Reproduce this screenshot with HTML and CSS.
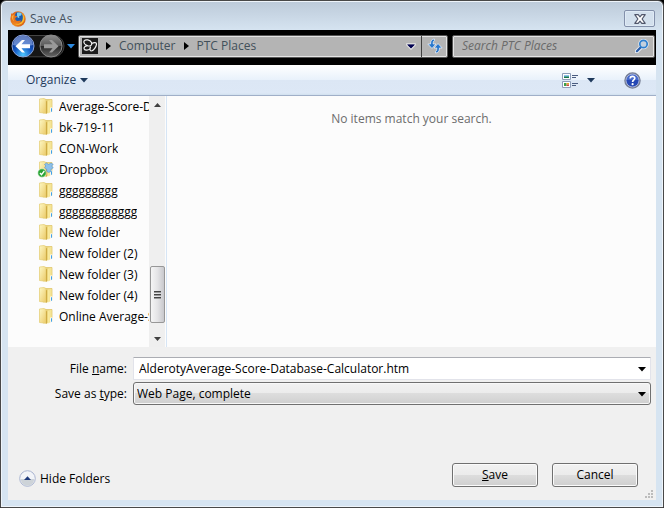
FILE: index.html
```html
<!DOCTYPE html>
<html lang="en">
<head>
    <meta charset="UTF-8">
    <meta name="viewport" content="width=device-width, initial-scale=1.0">
    <title>Save As</title>
    <link rel="stylesheet" href="styles.css">
</head>
<body>
    <svg class="defs" width="0" height="0" aria-hidden="true">
        <defs>
            <linearGradient id="gold" x1="0" x2="1" y1="0" y2="1">
                <stop offset="0" stop-color="#fdf8c4"/>
                <stop offset="1" stop-color="#ecca68"/>
            </linearGradient>
            <linearGradient id="goldSide" x1="0" x2="1">
                <stop offset="0" stop-color="#e2c864"/>
                <stop offset="1" stop-color="#f8eaa0"/>
            </linearGradient>
            <radialGradient id="blueBall" cx=".5" cy=".9" r=".8">
                <stop offset="0" stop-color="#4fc8ff"/>
                <stop offset=".5" stop-color="#1559c4"/>
                <stop offset="1" stop-color="#0b2a80"/>
            </radialGradient>
            <linearGradient id="greyBall" x1="0" x2="0" y1="0" y2="1">
                <stop offset="0" stop-color="#8c8c8c"/>
                <stop offset=".48" stop-color="#5a5a5a"/>
                <stop offset=".52" stop-color="#2a2a2a"/>
                <stop offset="1" stop-color="#666"/>
            </linearGradient>
            <linearGradient id="fox" x1="0" x2="1" y1="0" y2="1">
                <stop offset="0" stop-color="#d85a18"/>
                <stop offset=".6" stop-color="#f08a20"/>
                <stop offset="1" stop-color="#c84812"/>
            </linearGradient>
        </defs>
        <symbol id="folder" viewBox="0 0 14 17">
            <path d="M4 1.500h9v12l-9 1.500z" fill="url(#goldSide)" stroke="#dcc060" stroke-width=".7"/>
            <path d="M.5 1l4.500-.5 2 1v13.800L.5 14.500z" fill="url(#gold)" stroke="#e4cc70" stroke-width=".7"/>
            <path d="M7 3.500L8.500 2.500v12.500L7 16z" fill="#cfac44"/>
            <path d="M8.500 2.500l2.200 1V15l-2.200.5z" fill="#f9ea9c"/>
            <path d="M11.200 9.500h2.300v5h-2.300z" fill="#fff"/>
            <path d="M12 10.200h1v3.600h-1z" fill="#3fa0e8"/>
        </symbol>
        <symbol id="caret" viewBox="0 0 8 5">
            <path d="M0 0h8L4 4.500z" fill="currentColor"/>
        </symbol>
        <symbol id="chevron" viewBox="0 0 5 8">
            <path d="M0 0l5 4-5 4z" fill="#000"/>
        </symbol>
    </svg>

    <div class="window">
        <header class="titlebar">
            <svg class="app-icon" width="16" height="16" viewBox="0 0 16 16" aria-hidden="true">
                <circle cx="8" cy="8" r="7.700" fill="url(#fox)"/>
                <path d="M4.500 3C6 .600 10.500.400 12.500 3.500c1.300 2.500.8 5.500-1 7-2 1.200-4.500.8-6-1C4 7.500 3.500 5 4.500 3z" fill="#1d5cae"/>
                <path d="M7 1.800c1.800-.8 4-.3 4.800 1l-.8 1.700-2 .5.500 1.500-1.500.5-1-2z" fill="#7ccdf2"/>
                <path d="M1 2c.6.900 1.200 1.200 2 1.200 1-.8 2-1 3-.7-.8.800-1.300 1.500-1 2.300l2.300.3c0 .9-1 1.300-2 1.900-.4 1.800.9 3.100 2.500 3 1.300 0 2.200-.8 3.500-.4-1 1.800-2.800 2.300-4.500 2C4.500 12 1.500 10 1 7z" fill="#e8741c"/>
                <path d="M12.200 2.500c3 3.500 2.500 8-.7 10.300-2 1.200-4.500 1.200-6.500.2 3.500.4 6-.6 7.200-3 1-2.300.8-5 0-7.500z" fill="#fcc030"/>
                <path d="M1.800 5c.8-.8 1.500-1 2.200-.8-1.200 2-1 4.500.3 6.300C2.500 9.300 1.500 7 1.800 5z" fill="#f9b040"/>
            </svg>
            <h1 class="title">Save As</h1>
            <button class="close-btn" type="button" aria-label="Close">
                <svg width="12" height="10" viewBox="0 0 12 10" aria-hidden="true">
                    <path d="M.8.700h3.400L6 2.800 7.800.700h3.400L8.100 5l3.100 4.300H7.800L6 7.200 4.200 9.300H.8L3.900 5z" fill="#fff" stroke="#50566a" stroke-width="1.200" stroke-linejoin="round"/>
                </svg>
            </button>
        </header>

        <nav class="navbar">
            <div class="history">
                <svg class="history-bg" width="64" height="26" viewBox="0 0 64 26" aria-hidden="true">
                    <path d="M12 2.500h32a10.500 10.500 0 0 1 9 10.500 10.500 10.500 0 0 1-9 10.800H14" fill="#161616" stroke="#454545"/>
                </svg>
                <button class="round-btn" type="button" aria-label="Back">
                    <svg width="24" height="24" viewBox="0 0 24 24" aria-hidden="true">
                        <circle cx="12" cy="12" r="11" fill="url(#blueBall)" stroke="#8fa6d8"/>
                        <path d="M2 11a10 9.500 0 0 1 20 0c-6 1.500-14 1.500-20 0z" fill="#9cb8ec" opacity=".6"/>
                        <path d="M4.500 12.200l6.500-6.200h3l-3.500 4.200h8.500v4h-8.500l3.500 4.200h-3z" fill="#fff"/>
                    </svg>
                </button>
                <button class="round-btn" type="button" aria-label="Forward">
                    <svg width="24" height="24" viewBox="0 0 24 24" aria-hidden="true">
                        <circle cx="12" cy="12" r="11" fill="url(#greyBall)" stroke="#8a8a8a"/>
                        <path d="M19.500 12.200L13 6h-3l3.500 4.200H5v4h8.500L10 18.400h3z" fill="#9a9a9a"/>
                    </svg>
                </button>
                <button class="recent-btn" type="button" aria-label="Recent pages">
                    <svg width="8" height="5" aria-hidden="true"><use href="#caret"/></svg>
                </button>
            </div>
            <div class="address">
                <svg class="place-icon" width="16" height="16" viewBox="0 0 16 16" aria-hidden="true">
                    <rect width="16" height="16" fill="#1c1c1c"/>
                    <path d="M2 3c1.500-2 6-1.500 7.500 1.500C10.500 7 8.500 8.500 6 7.800 3.500 7 1.500 5 2 3zM9.800 5.500c2.500-1.500 5-1 4.700.8-.4 2.700-3 6.700-5.300 6.700-1.700 0-1.200-2.500-.7-4.500M5.500 8C3 7.700 1.500 9.500 2.200 11c.8 1.700 4.500 1.500 6-.5" fill="none" stroke="#f4f4f4" stroke-width="1.200"/>
                </svg>
                <svg class="crumb-arrow" width="5" height="8" aria-hidden="true"><use href="#chevron"/></svg>
                <a class="crumb" href="#">Computer</a>
                <svg class="crumb-arrow" width="5" height="8" aria-hidden="true"><use href="#chevron"/></svg>
                <a class="crumb" href="#">PTC Places</a>
                <button class="address-drop" type="button" aria-label="Previous locations">
                    <svg width="10" height="7" viewBox="0 0 10 7" aria-hidden="true">
                        <path d="M1 1h8v1L5 6 1 2z" fill="#000050" stroke="#e6e6e6" stroke-width="1.500"/>
                        <path d="M1 1.500h8L5 5.500z" fill="#000050"/>
                    </svg>
                </button>
                <button class="refresh-btn" type="button" aria-label="Refresh">
                    <svg width="16" height="16" viewBox="0 0 16 16" aria-hidden="true">
                        <path d="M7.500 1C5 1 3.500 2.500 3.500 6H.8L5 10.500 9 6H6.200c0-2 .3-3 1.300-3.500zM8.500 15c2.500 0 4-1.500 4-5h2.700L11 5.500 7 10h2.800c0 2-.3 3-1.300 3.500z" fill="#2a78cc" stroke="#e4eefa" stroke-width=".8"/>
                    </svg>
                </button>
            </div>
            <div class="search">
                <input class="search-input" type="search" placeholder="Search PTC Places" aria-label="Search PTC Places">
                <svg width="14" height="14" viewBox="0 0 14 14" aria-hidden="true">
                    <path d="M6 8.300L1.700 12.500" stroke="#e8eef6" stroke-width="4" stroke-linecap="round"/>
                    <circle cx="8.500" cy="5" r="3.700" fill="#c9d6e4" stroke="#e8eef6" stroke-width="3"/>
                    <path d="M6 8L1.900 12.200" stroke="#2b5da8" stroke-width="2.200" stroke-linecap="round"/>
                    <circle cx="8.500" cy="5" r="3.700" fill="#c3d0de" stroke="#2f80d0" stroke-width="1.700"/>
                </svg>
            </div>
        </nav>

        <div class="toolbar">
            <button class="tool-btn" type="button">Organize
                <svg width="8" height="5" aria-hidden="true"><use href="#caret"/></svg>
            </button>
            <button class="tool-btn view-btn" type="button" aria-label="Change your view">
                <svg width="17" height="17" viewBox="0 0 17 17" aria-hidden="true">
                    <path d="M.5 1.500h8v6h-8zM.5 9.500h8v6h-8z" fill="#fff" stroke="#8d9db8"/>
                    <path d="M2 3h5v3H2z" fill="#8cc4ee"/>
                    <path d="M2 4.500h5V6H2z" fill="#187848"/>
                    <path d="M2 11h2.500v3H2z" fill="#39a04c"/>
                    <path d="M4.500 11H7v1.500H4.500z" fill="#e8a828"/>
                    <path d="M4.500 12.500H7V14H4.500z" fill="#c84848"/>
                    <path d="M10 3.500h6M10 5.500h4M10 11.500h6M10 13.500h4" stroke="#4a5c80"/>
                </svg>
                <svg width="8" height="5" aria-hidden="true"><use href="#caret"/></svg>
            </button>
            <button class="tool-btn" type="button" aria-label="Get help">
                <svg width="17" height="17" viewBox="0 0 17 17" aria-hidden="true">
                    <circle cx="8.500" cy="8.500" r="7.500" fill="#2548b4" stroke="#777f94" stroke-width="1.500"/>
                    <path d="M2.500 8a6 6 0 0 1 12 0z" fill="#4468cc"/>
                    <circle cx="8.500" cy="8.500" r="6.500" fill="none" stroke="#c4cce4" stroke-width=".8"/>
                    <path d="M6.200 6.500c0-3 4.800-2.800 4.600-.2-.1 1.500-2.200 1.600-2.200 3.700" fill="none" stroke="#fff" stroke-width="1.700"/>
                    <circle cx="8.600" cy="12.200" r="1.100" fill="#fff"/>
                </svg>
            </button>
        </div>

        <main class="browser">
            <aside class="sidebar">
                <ul class="tree">
                    <li><svg width="14" height="17"><use href="#folder"/></svg><span>Average-Score-D</span></li>
                    <li><svg width="14" height="17"><use href="#folder"/></svg><span>bk-719-11</span></li>
                    <li><svg width="14" height="17"><use href="#folder"/></svg><span>CON-Work</span></li>
                    <li>
                        <svg width="14" height="17" viewBox="0 0 14 17" overflow="visible">
                            <use href="#folder" width="14" height="17"/>
                            <path d="M5.500 3.500L7.500 2l2 1.500L12 2l2.300 1.500L12.500 5l1.800 1.600-2.300 1.800v2l-2.300 1.100-1.900-1.100v-2L5.500 6.600 7 5z" fill="#8cc0ea" stroke="#5494cc" stroke-width=".6"/>
                            <circle cx="3" cy="12" r="4.200" fill="#28a434" stroke="#e4f4e4" stroke-width=".6"/>
                            <path d="M1 12l1.500 1.700L5.300 10" fill="none" stroke="#fff" stroke-width="1.300"/>
                        </svg>
                        <span>Dropbox</span>
                    </li>
                    <li><svg width="14" height="17"><use href="#folder"/></svg><span>ggggggggg</span></li>
                    <li><svg width="14" height="17"><use href="#folder"/></svg><span>gggggggggggg</span></li>
                    <li><svg width="14" height="17"><use href="#folder"/></svg><span>New folder</span></li>
                    <li><svg width="14" height="17"><use href="#folder"/></svg><span>New folder (2)</span></li>
                    <li><svg width="14" height="17"><use href="#folder"/></svg><span>New folder (3)</span></li>
                    <li><svg width="14" height="17"><use href="#folder"/></svg><span>New folder (4)</span></li>
                    <li><svg width="14" height="17"><use href="#folder"/></svg><span>Online Average-S</span></li>
                </ul>
                <div class="scrollbar">
                    <svg class="scroll-arrow" width="7" height="4" viewBox="0 0 7 4"><path d="M0 4h7L3.500 0z" fill="#404040"/></svg>
                    <div class="scroll-thumb"><i></i><i></i><i></i></div>
                    <svg class="scroll-arrow" width="7" height="4" viewBox="0 0 7 4"><path d="M0 0h7L3.500 4z" fill="#404040"/></svg>
                </div>
            </aside>
            <section class="files">
                <p class="empty">No items match your search.</p>
            </section>
        </main>

        <form class="details">
            <div class="fields">
                <label for="fileName">File <u>n</u>ame:</label>
                <div class="combo">
                    <input class="field" id="fileName" type="text" value="AlderotyAverage-Score-Database-Calculator.htm">
                    <svg class="combo-arrow" width="8" height="5" aria-hidden="true"><use href="#caret"/></svg>
                </div>
                <label for="fileType">Save as <u>t</u>ype:</label>
                <div class="combo">
                    <select class="field type-select" id="fileType">
                        <option>Web Page, complete</option>
                    </select>
                    <svg class="combo-arrow" width="8" height="5" aria-hidden="true"><use href="#caret"/></svg>
                </div>
            </div>
            <div class="actions">
                <button class="hide-btn" type="button">
                    <svg width="17" height="17" viewBox="0 0 17 17" aria-hidden="true">
                        <circle cx="8.500" cy="8.500" r="7.800" fill="#f2f4f8" stroke="#a9b4d0"/>
                        <path d="M1.800 9h13.400a6.700 6.700 0 0 1-13.400 0z" fill="#cdd3d8"/>
                        <path d="M5 10h7L8.500 6.300z" fill="#1e3a7c"/>
                    </svg>
                    Hide Folders
                </button>
                <button class="push-btn" type="submit"><span><u>S</u>ave</span></button>
                <button class="push-btn" type="button">Cancel</button>
            </div>
            <svg class="grip" width="8" height="8" viewBox="0 0 8 8" aria-hidden="true">
                <path d="M6 0h2v2H6zM3 3h2v2H3zM6 3h2v2H6zM0 6h2v2H0zM3 6h2v2H3zM6 6h2v2H6z" fill="#bcbcbc"/>
            </svg>
        </form>
    </div>
</body>
</html>
```
FILE: styles.css
```css
* {
    box-sizing: border-box;
}
body {
    margin: 0;
    background: #000;
    color: #000;
    font-family: "Open Sans", "Noto Sans", sans-serif;
    font-size: 12px;
    line-height: 16px;
}
button, input, select {
    font: inherit;
    color: inherit;
}
button {
    padding: 0;
    border: none;
    background: none;
}
svg {
    display: block;
    flex: none;
}
.defs {
    position: absolute;
}
.window {
    display: flex;
    flex-direction: column;
    min-height: 100vh;
    padding: 0 6px 7px;
    border: 1px solid #484848;
    border-radius: 6px 6px 0 0;
    background: linear-gradient(#bccad9, #d6e4f1 30px);
    box-shadow: inset 0 0 0 1px #eef4fa;
}

/* title bar */
.titlebar {
    display: flex;
    align-items: center;
    height: 29px;
    padding: 6px 2px 0 3px;
}
.title {
    flex: 1;
    margin: 0 0 0 4px;
    font-size: 12px;
    font-weight: normal;
    color: #44505e;
}
.close-btn {
    display: flex;
    align-items: center;
    justify-content: center;
    width: 31px;
    height: 17px;
    border: 1px solid #8390aa;
    border-radius: 2px;
    background: #d3e0ed;
    box-shadow: inset 0 0 0 1px #dfeaf5;
}

/* navigation */
.navbar {
    display: flex;
    align-items: center;
    height: 35px;
    margin: 0 1px;
    padding: 0 1px 3px 3px;
    background: #000;
}
.history {
    position: relative;
    display: flex;
    align-items: center;
    gap: 4px;
    width: 67px;
    height: 26px;
}
.history-bg {
    position: absolute;
    left: 0;
    top: 0;
}
.round-btn,
.recent-btn {
    position: relative;
}
.recent-btn {
    color: #2c8ae0;
}
.address,
.search {
    display: flex;
    align-items: center;
    height: 23px;
    border: 1px solid #555;
    border-radius: 2px;
    background: #b4b4b4;
    box-shadow: inset 0 0 0 1px #e4e4e4;
}
.address {
    flex: 1;
    gap: 8px;
    padding-left: 3px;
}
.crumb {
    color: #42505a;
    text-decoration: none;
}
.address-drop {
    margin-left: auto;
}
.refresh-btn {
    display: flex;
    align-items: center;
    justify-content: center;
    width: 26px;
    height: 21px;
    margin-left: -3px;
    border-left: 1px solid #404040;
}
.search {
    width: 203px;
    margin-left: 4px;
    padding: 0 5px 0 9px;
}
.search-input {
    flex: 1;
    min-width: 0;
    padding: 0;
    border: none;
    outline: none;
    background: transparent;
    font-style: italic;
}
.search-input::placeholder {
    color: #6a6a6a;
}

/* command bar */
.toolbar {
    display: flex;
    align-items: center;
    height: 31px;
    margin: 0 1px;
    padding: 0 15px 0 18px;
    border-bottom: 1px solid #a0afc8;
    background: linear-gradient(#fff, #e8f1fb 15px, #dce7f5 15px, #dde8f6 28px, #d0e0ee);
    color: #1e395b;
}
.tool-btn {
    display: flex;
    align-items: center;
    gap: 4px;
    color: #1e395b;
}
.view-btn {
    gap: 8px;
    margin: 0 29px 0 auto;
}

/* folder tree and file list */
.browser {
    display: flex;
    height: 251px;
    margin: 0 1px;
    background: #fcfcfc;
}
.sidebar {
    display: flex;
    width: 159px;
    border-right: 1px solid #d6e5f5;
}
.tree {
    flex: 1;
    min-width: 0;
    margin: 0;
    padding: 0 0 0 31px;
    list-style: none;
}
.tree li {
    display: flex;
    align-items: center;
    gap: 6px;
    height: 21px;
}
.tree span {
    overflow: hidden;
    white-space: nowrap;
}
.scrollbar {
    display: flex;
    flex-direction: column;
    align-items: center;
    width: 16px;
    margin-right: 1px;
    padding: 7px 0 6px;
    background: #efefef;
}
.scroll-thumb {
    display: flex;
    flex-direction: column;
    align-items: center;
    justify-content: center;
    gap: 1px;
    width: 15px;
    height: 57px;
    margin: auto 0 14px;
    border: 1px solid #979797;
    border-radius: 2px;
    background: linear-gradient(90deg, #f5f5f5, #e4e4e6 50%, #c8c8cc);
}
.scroll-thumb i {
    width: 7px;
    height: 2px;
    border-bottom: 1px solid #999;
    background: #444;
}
.files {
    flex: 1;
}
.empty {
    margin: 15px 0 0;
    text-align: center;
    color: #6d6d6d;
}

/* file name, type and buttons */
.details {
    position: relative;
    display: flex;
    flex: 1;
    flex-direction: column;
    justify-content: space-between;
    margin: 0 1px;
    padding: 10px 5px 13px 11px;
    background: #f0f0f0;
}
.fields {
    display: grid;
    grid-template-columns: 108px 1fr;
    align-items: center;
    gap: 2px 6px;
}
.fields label {
    text-align: right;
}
.combo {
    position: relative;
}
.field {
    display: block;
    width: 100%;
    height: 23px;
    padding: 0 20px 0 5px;
    border: 1px solid #e2e3ea;
    border-top-color: #abadb3;
    border-radius: 1px;
    background: #fff;
}
.type-select {
    appearance: none;
    padding-left: 3px;
    border: 1px solid #707070;
    border-radius: 3px;
    background: linear-gradient(#f2f2f2, #ebebeb 50%, #dddddd 50%, #cfcfcf);
    box-shadow: inset 0 0 0 1px #f8f8f8;
}
.combo-arrow {
    position: absolute;
    right: 5px;
    top: 10px;
    pointer-events: none;
}
.actions {
    display: flex;
    align-items: flex-end;
    gap: 14px;
    padding-right: 13px;
}
.hide-btn {
    display: flex;
    align-items: center;
    gap: 4px;
    margin-right: auto;
}
.push-btn {
    width: 86px;
    height: 24px;
    border: 1px solid #707070;
    border-radius: 3px;
    background: linear-gradient(#f2f2f2, #ebebeb 50%, #dddddd 50%, #cfcfcf);
    box-shadow: inset 0 0 0 1px #fbfbfb;
}
.grip {
    position: absolute;
    right: 3px;
    bottom: 2px;
}
```
